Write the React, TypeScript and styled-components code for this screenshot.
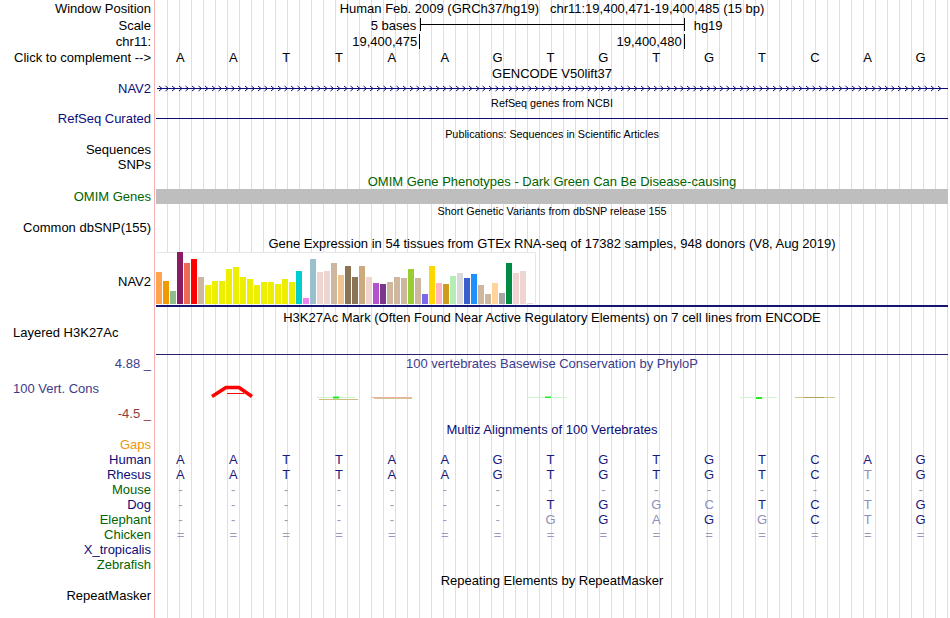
import styled, { createGlobalStyle } from "styled-components";

const NAVY = "#0c0c78";
const GREEN = "#006400";
const CONS = "#3c3c8c";
const GUIDE = "#dcdcf6";
const PINK = "#f6b2b2";

type Tone = "plain" | "match" | "mismatch" | "gap";

const GlobalStyle = createGlobalStyle`
  html, body {
    margin: 0;
    padding: 0;
    background: #fff;
  }
  body {
    font-family: "Liberation Sans", Arial, Helvetica, sans-serif;
    font-size: 13px;
    color: #000;
  }
`;

const Browser = styled.div`
  width: 950px;
  height: 618px;
  overflow: hidden;
  display: flex;
  flex-direction: column;
`;

const Row = styled.div<{ $h: number }>`
  flex: none;
  display: grid;
  grid-template-columns: 154px 796px;
  height: ${(p) => p.$h}px;
  line-height: ${(p) => p.$h}px;
`;

const Side = styled.div<{ $color?: string; $indent?: boolean; $lh?: number }>`
  color: ${(p) => p.$color ?? "#000"};
  text-align: ${(p) => (p.$indent ? "left" : "right")};
  padding: ${(p) => (p.$indent ? "0 0 0 13px" : "0 3px 0 0")};
  white-space: nowrap;
  ${(p) => (p.$lh ? `line-height: ${p.$lh}px;` : "")}
`;

const Lane = styled.div`
  display: flex;
  flex-direction: column;
  background:
    linear-gradient(${PINK}, ${PINK}) 0 0 / 1px 100% no-repeat,
    linear-gradient(#fff, #fff) 1px 0 / 1px 100% no-repeat,
    repeating-linear-gradient(90deg, transparent 0 1px, ${GUIDE} 1px 2px, transparent 2px 12px) #fff;
`;

const Caption = styled.div<{ $small?: boolean; $color?: string; $top?: number; $lh?: number }>`
  text-align: center;
  white-space: pre;
  font-size: ${(p) => (p.$small ? "10.8px" : "13px")};
  color: ${(p) => p.$color ?? "#000"};
  padding-top: ${(p) => p.$top ?? 0}px;
  ${(p) => (p.$lh ? `line-height: ${p.$lh}px;` : "")}
`;

/* ruler */
const RulerGrid = styled.div`
  display: grid;
  grid-template-columns: repeat(15, 1fr);
  width: 793px;
  margin-left: 2px;
`;

const RulerCaption = styled.div`
  grid-column: 1 / 6;
  text-align: right;
  padding-right: 4px;
`;

const RulerBar = styled.div`
  grid-column: 6 / 11;
  align-self: start;
  position: relative;
  height: 13px;
  margin-top: 1px;
  border-left: 1px solid #000;
  border-right: 1px solid #000;

  &::before {
    content: "";
    position: absolute;
    left: 0;
    right: 0;
    top: 6px;
    height: 1px;
    background: #000;
  }
`;

const RulerTag = styled.div`
  grid-column: 11 / 16;
  padding-left: 9px;
`;

const Coord = styled.div<{ $span: string }>`
  grid-column: ${(p) => p.$span};
  align-self: start;
  height: 15px;
  line-height: 15px;
  text-align: right;
  padding-right: 2px;
  border-right: 1px solid #000;
`;

/* bases */
const BaseGrid = styled.div`
  display: grid;
  grid-template-columns: repeat(15, 1fr);
  width: 793px;
`;

const toneColor: Record<Tone, string> = {
  plain: "#000",
  match: "#1a1a7c",
  mismatch: "#8e8eba",
  gap: "#9a9abc",
};

const Base = styled.span<{ $tone: Tone }>`
  text-align: center;
  color: ${(p) => toneColor[p.$tone]};
`;

/* gene tracks */
const GeneGlyph = styled.svg`
  display: block;
  margin: 3px 0 0 3px;
`;

const FlatLine = styled.div<{ $color: string; $top: number; $h?: number }>`
  width: 792px;
  height: ${(p) => p.$h ?? 1}px;
  margin: ${(p) => p.$top}px 0 0 2px;
  background: ${(p) => p.$color};
`;

const OmimBar = styled.div`
  width: 792px;
  height: 15px;
  margin-left: 2px;
  background: #bebebe;
`;

/* GTEx */
const GtexBox = styled.div`
  display: flex;
  align-items: flex-end;
  gap: 1px;
  box-sizing: border-box;
  width: 380px;
  height: 52px;
  margin-left: 2px;
  background: #fff;
  border-top: 1px solid #e6e6e6;
  border-right: 1px solid #e6e6e6;
`;

const GtexBar = styled.div`
  flex: none;
  width: 6px;
`;

const BottomLane = styled(Lane)`
  justify-content: flex-end;
`;

/* conservation */
const ScaleStack = styled.div`
  display: flex;
  flex-direction: column;
  gap: 9px;
  padding-top: 1px;
  line-height: 16px;
`;

const ScaleMark = styled.div<{ $color: string }>`
  text-align: right;
  padding-right: 3px;
  color: ${(p) => p.$color};
  white-space: pre;
`;

const ScaleName = styled.div`
  padding-left: 13px;
  color: ${CONS};
`;

const ConsLane = styled(Lane)`
  padding-top: 1px;
`;

const ConsChart = styled.svg`
  display: block;
`;

const TwoLine = styled.div`
  text-align: right;
  padding-right: 3px;
  line-height: 15.3px;
`;

const GtexLabel = styled.div`
  padding-top: 22px;
`;

const REF = "AATTAAGTGTGTCAG";

const gtex: [number, string][] = [
  [32, "#ffa54f"], [23, "#ee9a00"], [13, "#8fbc8f"], [52, "#8b1c62"], [41, "#ee6a50"],
  [45, "#ff0000"], [27, "#cdb79e"], [19, "#eeee00"], [23, "#eeee00"], [23, "#eeee00"],
  [35, "#eeee00"], [37, "#eeee00"], [27, "#eeee00"], [25, "#eeee00"], [19, "#eeee00"],
  [22, "#eeee00"], [22, "#eeee00"], [20, "#eeee00"], [25, "#eeee00"], [22, "#eeee00"],
  [33, "#00cdcd"], [6, "#ee82ee"], [45, "#9ac0cd"], [32, "#eed5d2"], [33, "#eed5d2"],
  [41, "#cdb79e"], [29, "#eec591"], [38, "#8b7355"], [27, "#8b7355"], [38, "#cdaa7d"],
  [27, "#eed5d2"], [21, "#b452cd"], [20, "#7a378b"], [22, "#cdb79e"], [27, "#cdb79e"],
  [26, "#cdb79e"], [35, "#9acd32"], [26, "#cdb79e"], [10, "#7a67ee"], [38, "#ffd700"],
  [21, "#ffb6c1"], [20, "#cd9b1d"], [28, "#b4eeb4"], [31, "#d9d9d9"], [26, "#3a5fcd"],
  [30, "#1e90ff"], [19, "#cdb79e"], [10, "#cdb79e"], [21, "#ffd39b"], [11, "#a6a6a6"],
  [41, "#008b45"], [31, "#eed5d2"], [33, "#eed5d2"], [1, "#e8d0e8"],
];

const species: { name: string; color: string; seq?: string }[] = [
  { name: "Human", color: NAVY, seq: REF },
  { name: "Rhesus", color: NAVY, seq: "AATTAAGTGTGTCTG" },
  { name: "Mouse", color: GREEN, seq: "---------------" },
  { name: "Dog", color: NAVY, seq: "-------TGGCTCTG" },
  { name: "Elephant", color: GREEN, seq: "-------GGAGGCTG" },
  { name: "Chicken", color: GREEN, seq: "===============" },
  { name: "X_tropicalis", color: NAVY },
  { name: "Zebrafish", color: GREEN },
];

const toneOf = (ch: string, i: number): Tone => {
  if (ch === "-" || ch === "=") return "gap";
  return ch === REF[i] ? "match" : "mismatch";
};

const Sequence = ({ seq, tone }: { seq: string; tone?: Tone }) => (
  <BaseGrid>
    {seq.split("").map((ch, i) => (
      <Base key={i} $tone={tone ?? toneOf(ch, i)}>
        {ch}
      </Base>
    ))}
  </BaseGrid>
);

const GeneWithArrows = () => {
  const xs: number[] = [];
  for (let x = 2; x < 786; x += 6.6) xs.push(Math.round(x * 2) / 2);
  return (
    <GeneGlyph width="791" height="9" viewBox="0 0 791 9">
      <line x1="0" y1="4.5" x2="791" y2="4.5" stroke={NAVY} />
      {xs.map((x) => (
        <polyline
          key={x}
          points={`${x},2 ${x + 3},4.5 ${x},7`}
          fill="none"
          stroke={NAVY}
          strokeWidth="1"
        />
      ))}
    </GeneGlyph>
  );
};

const PhyloP = () => (
  <ConsChart width="793" height="50" viewBox="0 0 793 50">
    <polyline
      points="58,24.5 72,15.5 85,15.5 98,24.5"
      fill="none"
      stroke="#ff0000"
      strokeWidth="3.5"
      strokeLinejoin="round"
    />
    <line x1="73" y1="21.5" x2="90" y2="21.5" stroke="#ff0000" />
    <line x1="163" y1="25.5" x2="201" y2="25.5" stroke="#c8f2c8" />
    <line x1="165" y1="27.5" x2="204" y2="27.5" stroke="#cbbd7c" />
    <rect x="179" y="24.5" width="6" height="2" fill="#1eee1e" />
    <line x1="218" y1="25.5" x2="258" y2="25.5" stroke="#eeb0a8" />
    <line x1="220" y1="26.5" x2="258" y2="26.5" stroke="#d0c490" />
    <line x1="374" y1="25.5" x2="413" y2="25.5" stroke="#d0f4d0" />
    <rect x="391" y="24.5" width="6" height="1.5" fill="#1eee1e" />
    <line x1="586" y1="25.5" x2="623" y2="25.5" stroke="#d0f4d0" />
    <rect x="602" y="25" width="6" height="2" fill="#1eee1e" />
    <line x1="641" y1="25.5" x2="681" y2="25.5" stroke="#d0c490" />
    <line x1="650" y1="25.5" x2="670" y2="25.5" stroke="#b4a258" />
  </ConsChart>
);

export default function App() {
  return (
    <>
      <GlobalStyle />
      <Browser>
        <Row $h={17}>
          <Side>Window Position</Side>
          <Lane>
            <Caption>{"Human Feb. 2009 (GRCh37/hg19)   chr11:19,400,471-19,400,485 (15 bp)"}</Caption>
          </Lane>
        </Row>
        <Row $h={17}>
          <Side>Scale</Side>
          <Lane>
            <RulerGrid>
              <RulerCaption>5 bases</RulerCaption>
              <RulerBar />
              <RulerTag>hg19</RulerTag>
            </RulerGrid>
          </Lane>
        </Row>
        <Row $h={16}>
          <Side>chr11:</Side>
          <Lane>
            <RulerGrid>
              <Coord $span="1 / 6">19,400,475</Coord>
              <Coord $span="6 / 11">19,400,480</Coord>
            </RulerGrid>
          </Lane>
        </Row>
        <Row $h={16}>
          <Side>Click to complement --&gt;</Side>
          <Lane>
            <Sequence seq={REF} tone="plain" />
          </Lane>
        </Row>

        <Row $h={15}>
          <Side />
          <Lane>
            <Caption>GENCODE V50lift37</Caption>
          </Lane>
        </Row>
        <Row $h={15}>
          <Side $color={NAVY}>NAV2</Side>
          <Lane>
            <GeneWithArrows />
          </Lane>
        </Row>

        <Row $h={15}>
          <Side />
          <Lane>
            <Caption $small>RefSeq genes from NCBI</Caption>
          </Lane>
        </Row>
        <Row $h={16}>
          <Side $color={NAVY}>RefSeq Curated</Side>
          <Lane>
            <FlatLine $color={NAVY} $top={7} />
          </Lane>
        </Row>

        <Row $h={15}>
          <Side />
          <Lane>
            <Caption $small>Publications: Sequences in Scientific Articles</Caption>
          </Lane>
        </Row>
        <Row $h={33}>
          <TwoLine>
            Sequences
            <br />
            SNPs
          </TwoLine>
          <Lane />
        </Row>

        <Row $h={14}>
          <Side />
          <Lane>
            <Caption $color={GREEN}>OMIM Gene Phenotypes - Dark Green Can Be Disease-causing</Caption>
          </Lane>
        </Row>
        <Row $h={15}>
          <Side $color={GREEN}>OMIM Genes</Side>
          <Lane>
            <OmimBar />
          </Lane>
        </Row>

        <Row $h={15}>
          <Side />
          <Lane>
            <Caption $small>Short Genetic Variants from dbSNP release 155</Caption>
          </Lane>
        </Row>
        <Row $h={17}>
          <Side>Common dbSNP(155)</Side>
          <Lane />
        </Row>

        <Row $h={16}>
          <Side />
          <Lane>
            <Caption>
              Gene Expression in 54 tissues from GTEx RNA-seq of 17382 samples, 948 donors (V8, Aug 2019)
            </Caption>
          </Lane>
        </Row>
        <Row $h={55}>
          <Side $lh={15}>
            <GtexLabel>NAV2</GtexLabel>
          </Side>
          <Lane>
            <GtexBox>
              {gtex.map(([h, c], i) => (
                <GtexBar key={i} style={{ height: h, background: c }} />
              ))}
            </GtexBox>
            <FlatLine $color="#16166e" $top={1} $h={2} />
          </Lane>
        </Row>

        <Row $h={18}>
          <Side />
          <Lane>
            <Caption $top={3} $lh={15}>
              H3K27Ac Mark (Often Found Near Active Regulatory Elements) on 7 cell lines from ENCODE
            </Caption>
          </Lane>
        </Row>
        <Row $h={30}>
          <Side $indent $lh={15}>
            Layered H3K27Ac
          </Side>
          <BottomLane>
            <FlatLine $color="#2b2070" $top={0} />
          </BottomLane>
        </Row>

        <Row $h={67}>
          <ScaleStack>
            <ScaleMark $color={CONS}>4.88 _</ScaleMark>
            <ScaleName>100 Vert. Cons</ScaleName>
            <ScaleMark $color="#8c3c3c">-4.5 _</ScaleMark>
          </ScaleStack>
          <ConsLane>
            <Caption $color={CONS} $lh={16}>
              100 vertebrates Basewise Conservation by PhyloP
            </Caption>
            <PhyloP />
          </ConsLane>
        </Row>

        <Row $h={15}>
          <Side />
          <Lane>
            <Caption $color={NAVY}>Multiz Alignments of 100 Vertebrates</Caption>
          </Lane>
        </Row>
        <Row $h={15}>
          <Side $color="#f0950a">Gaps</Side>
          <Lane />
        </Row>
        {species.map((s) => (
          <Row $h={15} key={s.name}>
            <Side $color={s.color}>{s.name}</Side>
            <Lane>{s.seq && <Sequence seq={s.seq} />}</Lane>
          </Row>
        ))}

        <Row $h={16}>
          <Side />
          <Lane>
            <Caption $top={1} $lh={15}>
              Repeating Elements by RepeatMasker
            </Caption>
          </Lane>
        </Row>
        <Row $h={30}>
          <Side $lh={15}>RepeatMasker</Side>
          <Lane />
        </Row>
      </Browser>
    </>
  );
}
